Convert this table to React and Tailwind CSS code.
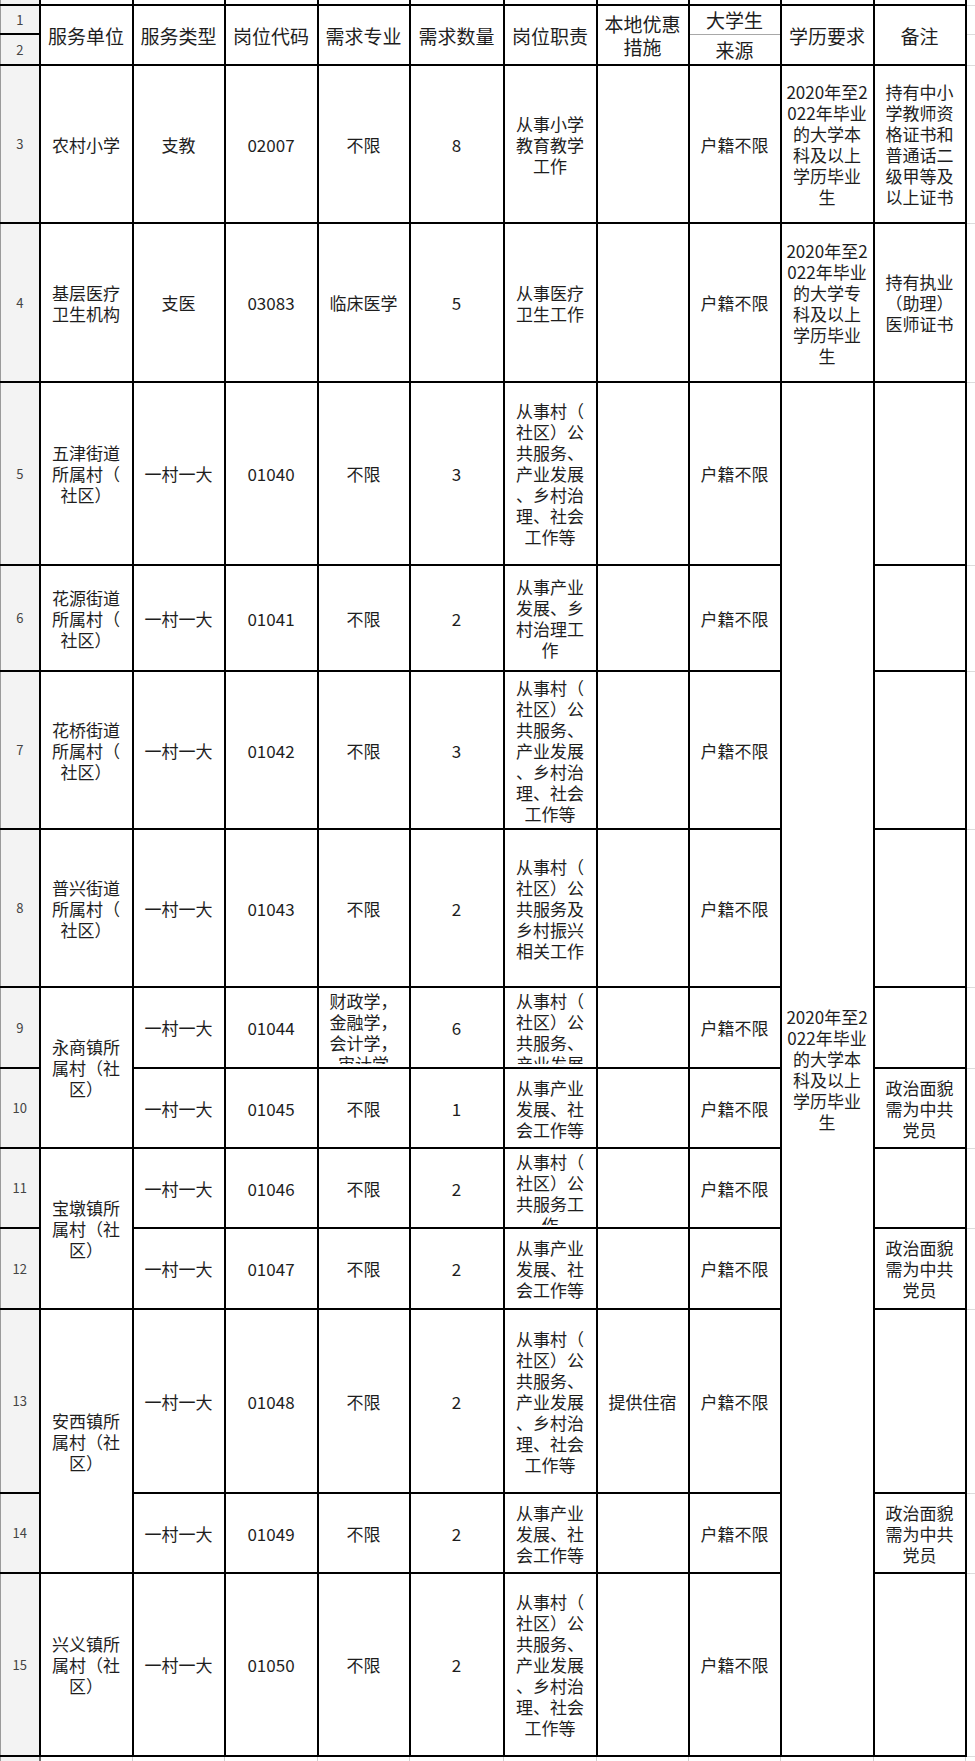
import React from 'react';

const edu = ['2020年至2', '022年毕业', '的大学本', '科及以上', '学历毕业', '生'];
const eduZk = ['2020年至2', '022年毕业', '的大学专', '科及以上', '学历毕业', '生'];
const duty7 = ['从事村（', '社区）公', '共服务、', '产业发展', '、乡村治', '理、社会', '工作等'];
const dutyIndustry = ['从事产业', '发展、社', '会工作等'];
const party = ['政治面貌', '需为中共', '党员'];
const jd = (name) => [name, '所属村（', '社区）'];
const town = (name) => [name, '属村（社', '区）'];

const rows = [
  {
    n: 3, h: 'h-[158px]',
    cells: [
      { t: ['农村小学'] }, { t: ['支教'] }, { t: ['02007'] }, { t: ['不限'] }, { t: ['8'] },
      { t: ['从事小学', '教育教学', '工作'] }, { t: [] }, { t: ['户籍不限'] }, { t: edu },
      { t: ['持有中小', '学教师资', '格证书和', '普通话二', '级甲等及', '以上证书'] },
    ],
  },
  {
    n: 4, h: 'h-[159px]',
    cells: [
      { t: ['基层医疗', '卫生机构'] }, { t: ['支医'] }, { t: ['03083'] }, { t: ['临床医学'] }, { t: ['5'] },
      { t: ['从事医疗', '卫生工作'] }, { t: [] }, { t: ['户籍不限'] }, { t: eduZk },
      { t: ['持有执业', '（助理）', '医师证书'] },
    ],
  },
  {
    n: 5, h: 'h-[183px]',
    cells: [
      { t: jd('五津街道') }, { t: ['一村一大'] }, { t: ['01040'] }, { t: ['不限'] }, { t: ['3'] },
      { t: duty7 }, { t: [] }, { t: ['户籍不限'] }, { t: edu, rs: 11 }, { t: [] },
    ],
  },
  {
    n: 6, h: 'h-[106px]',
    cells: [
      { t: jd('花源街道') }, { t: ['一村一大'] }, { t: ['01041'] }, { t: ['不限'] }, { t: ['2'] },
      { t: ['从事产业', '发展、乡', '村治理工', '作'] }, { t: [] }, { t: ['户籍不限'] }, { t: [] },
    ],
  },
  {
    n: 7, h: 'h-[158px]',
    cells: [
      { t: jd('花桥街道') }, { t: ['一村一大'] }, { t: ['01042'] }, { t: ['不限'] }, { t: ['3'] },
      { t: duty7 }, { t: [] }, { t: ['户籍不限'] }, { t: [] },
    ],
  },
  {
    n: 8, h: 'h-[158px]',
    cells: [
      { t: jd('普兴街道') }, { t: ['一村一大'] }, { t: ['01043'] }, { t: ['不限'] }, { t: ['2'] },
      { t: ['从事村（', '社区）公', '共服务及', '乡村振兴', '相关工作'] }, { t: [] }, { t: ['户籍不限'] }, { t: [] },
    ],
  },
  {
    n: 9, h: 'h-[81px]',
    cells: [
      { t: town('永商镇所'), rs: 2 }, { t: ['一村一大'] }, { t: ['01044'] },
      { t: ['财政学，', '金融学，', '会计学，', '审计学'], clip: true }, { t: ['6'] },
      { t: duty7, clip: true }, { t: [] }, { t: ['户籍不限'] }, { t: [] },
    ],
  },
  {
    n: 10, h: 'h-[80px]',
    cells: [
      { t: ['一村一大'] }, { t: ['01045'] }, { t: ['不限'] }, { t: ['1'] },
      { t: dutyIndustry }, { t: [] }, { t: ['户籍不限'] }, { t: party },
    ],
  },
  {
    n: 11, h: 'h-[80px]',
    cells: [
      { t: town('宝墩镇所'), rs: 2 }, { t: ['一村一大'] }, { t: ['01046'] }, { t: ['不限'] }, { t: ['2'] },
      { t: ['从事村（', '社区）公', '共服务工', '作'], clip: true }, { t: [] }, { t: ['户籍不限'] }, { t: [] },
    ],
  },
  {
    n: 12, h: 'h-[81px]',
    cells: [
      { t: ['一村一大'] }, { t: ['01047'] }, { t: ['不限'] }, { t: ['2'] },
      { t: dutyIndustry }, { t: [] }, { t: ['户籍不限'] }, { t: party },
    ],
  },
  {
    n: 13, h: 'h-[184px]',
    cells: [
      { t: town('安西镇所'), rs: 2 }, { t: ['一村一大'] }, { t: ['01048'] }, { t: ['不限'] }, { t: ['2'] },
      { t: duty7 }, { t: ['提供住宿'] }, { t: ['户籍不限'] }, { t: [] },
    ],
  },
  {
    n: 14, h: 'h-[80px]',
    cells: [
      { t: ['一村一大'] }, { t: ['01049'] }, { t: ['不限'] }, { t: ['2'] },
      { t: dutyIndustry }, { t: [] }, { t: ['户籍不限'] }, { t: party },
    ],
  },
  {
    n: 15, h: 'h-[183px]',
    cells: [
      { t: town('兴义镇所') }, { t: ['一村一大'] }, { t: ['01050'] }, { t: ['不限'] }, { t: ['2'] },
      { t: duty7 }, { t: [] }, { t: ['户籍不限'] }, { t: [] },
    ],
  },
];

const colWidths = [
  'w-[39px]', 'w-[93px]', 'w-[92px]', 'w-[93px]', 'w-[92px]', 'w-[94px]',
  'w-[93px]', 'w-[92px]', 'w-[92px]', 'w-[93px]', 'w-[92px]', 'w-[10px]',
];

const headers = [
  ['服务单位'], ['服务类型'], ['岗位代码'], ['需求专业'], ['需求数量'],
  ['岗位职责'], ['本地优惠', '措施'],
];

const Lines = ({ t }) =>
  t.map((line, i) => (
    <div key={i} className="whitespace-nowrap">
      {line}
    </div>
  ));

const Cell = ({ c }) => (
  <td
    rowSpan={c.rs}
    className={`border-2 border-black px-[3px] py-0 text-center ${c.clip ? 'align-top' : 'align-middle'}`}
  >
    {c.clip ? (
      <div className="h-[76px] overflow-hidden pt-[2px]">
        <Lines t={c.t} />
      </div>
    ) : (
      <Lines t={c.t} />
    )}
  </td>
);

const RowNum = ({ n }) => (
  <td className="border-y-2 border-r-2 border-l border-black border-l-[#9a9a9a] bg-[#f3f3f3] p-0 text-center align-middle text-[13px] leading-[16px] text-[#444]">
    {n}
  </td>
);

const Extra = () => <td className="border-b border-[#dcdcdc] p-0" />;

const HeadCell = ({ t }) => (
  <td rowSpan={2} className="border-2 border-black px-[3px] py-0 text-center align-middle text-[19px] leading-[23px]">
    <Lines t={t} />
  </td>
);

export default function App() {
  return (
    <div className="w-[975px] bg-white">
      <table className="w-[975px] table-fixed border-collapse font-['Noto_Sans_CJK_SC','Noto_Sans',sans-serif] text-[17px] leading-[21px] text-[#1e1e1e]">
        <colgroup>
          {colWidths.map((w, i) => (
            <col key={i} className={w} />
          ))}
        </colgroup>
        <tbody>
          {/* sliver of the row above the header */}
          <tr className="h-[5px]">
            <td className="border-r-2 border-b-2 border-l border-black border-l-[#9a9a9a] bg-[#f3f3f3] p-0" />
            {Array.from({ length: 10 }).map((_, i) => (
              <td key={i} className="border-x-2 border-b-2 border-black p-0" />
            ))}
            <Extra />
          </tr>

          <tr className="h-[29px]">
            <RowNum n={1} />
            {headers.map((t, i) => (
              <HeadCell key={i} t={t} />
            ))}
            <td className="border-x-2 border-t-2 border-b border-black border-b-[#a8a8a8] px-[3px] py-0 text-center align-middle text-[19px] leading-[23px]">
              大学生
            </td>
            <HeadCell t={['学历要求']} />
            <HeadCell t={['备注']} />
            <Extra />
          </tr>
          <tr className="h-[31px]">
            <RowNum n={2} />
            <td className="border-x-2 border-b-2 border-t border-black border-t-[#a8a8a8] px-[3px] py-0 text-center align-middle text-[19px] leading-[23px]">
              来源
            </td>
            <Extra />
          </tr>

          {rows.map((r) => (
            <tr key={r.n} className={r.h}>
              <RowNum n={r.n} />
              {r.cells.map((c, i) => (
                <Cell key={i} c={c} />
              ))}
              <Extra />
            </tr>
          ))}

          <tr className="h-[5px]">
            <td className="border-r-2 border-l border-[#6a6a6a] border-l-[#9a9a9a] bg-[#f3f3f3] p-0" />
            {Array.from({ length: 10 }).map((_, i) => (
              <td key={i} className="border-x border-[#cfcfcf] p-0" />
            ))}
            <td className="p-0" />
          </tr>
        </tbody>
      </table>
    </div>
  );
}
